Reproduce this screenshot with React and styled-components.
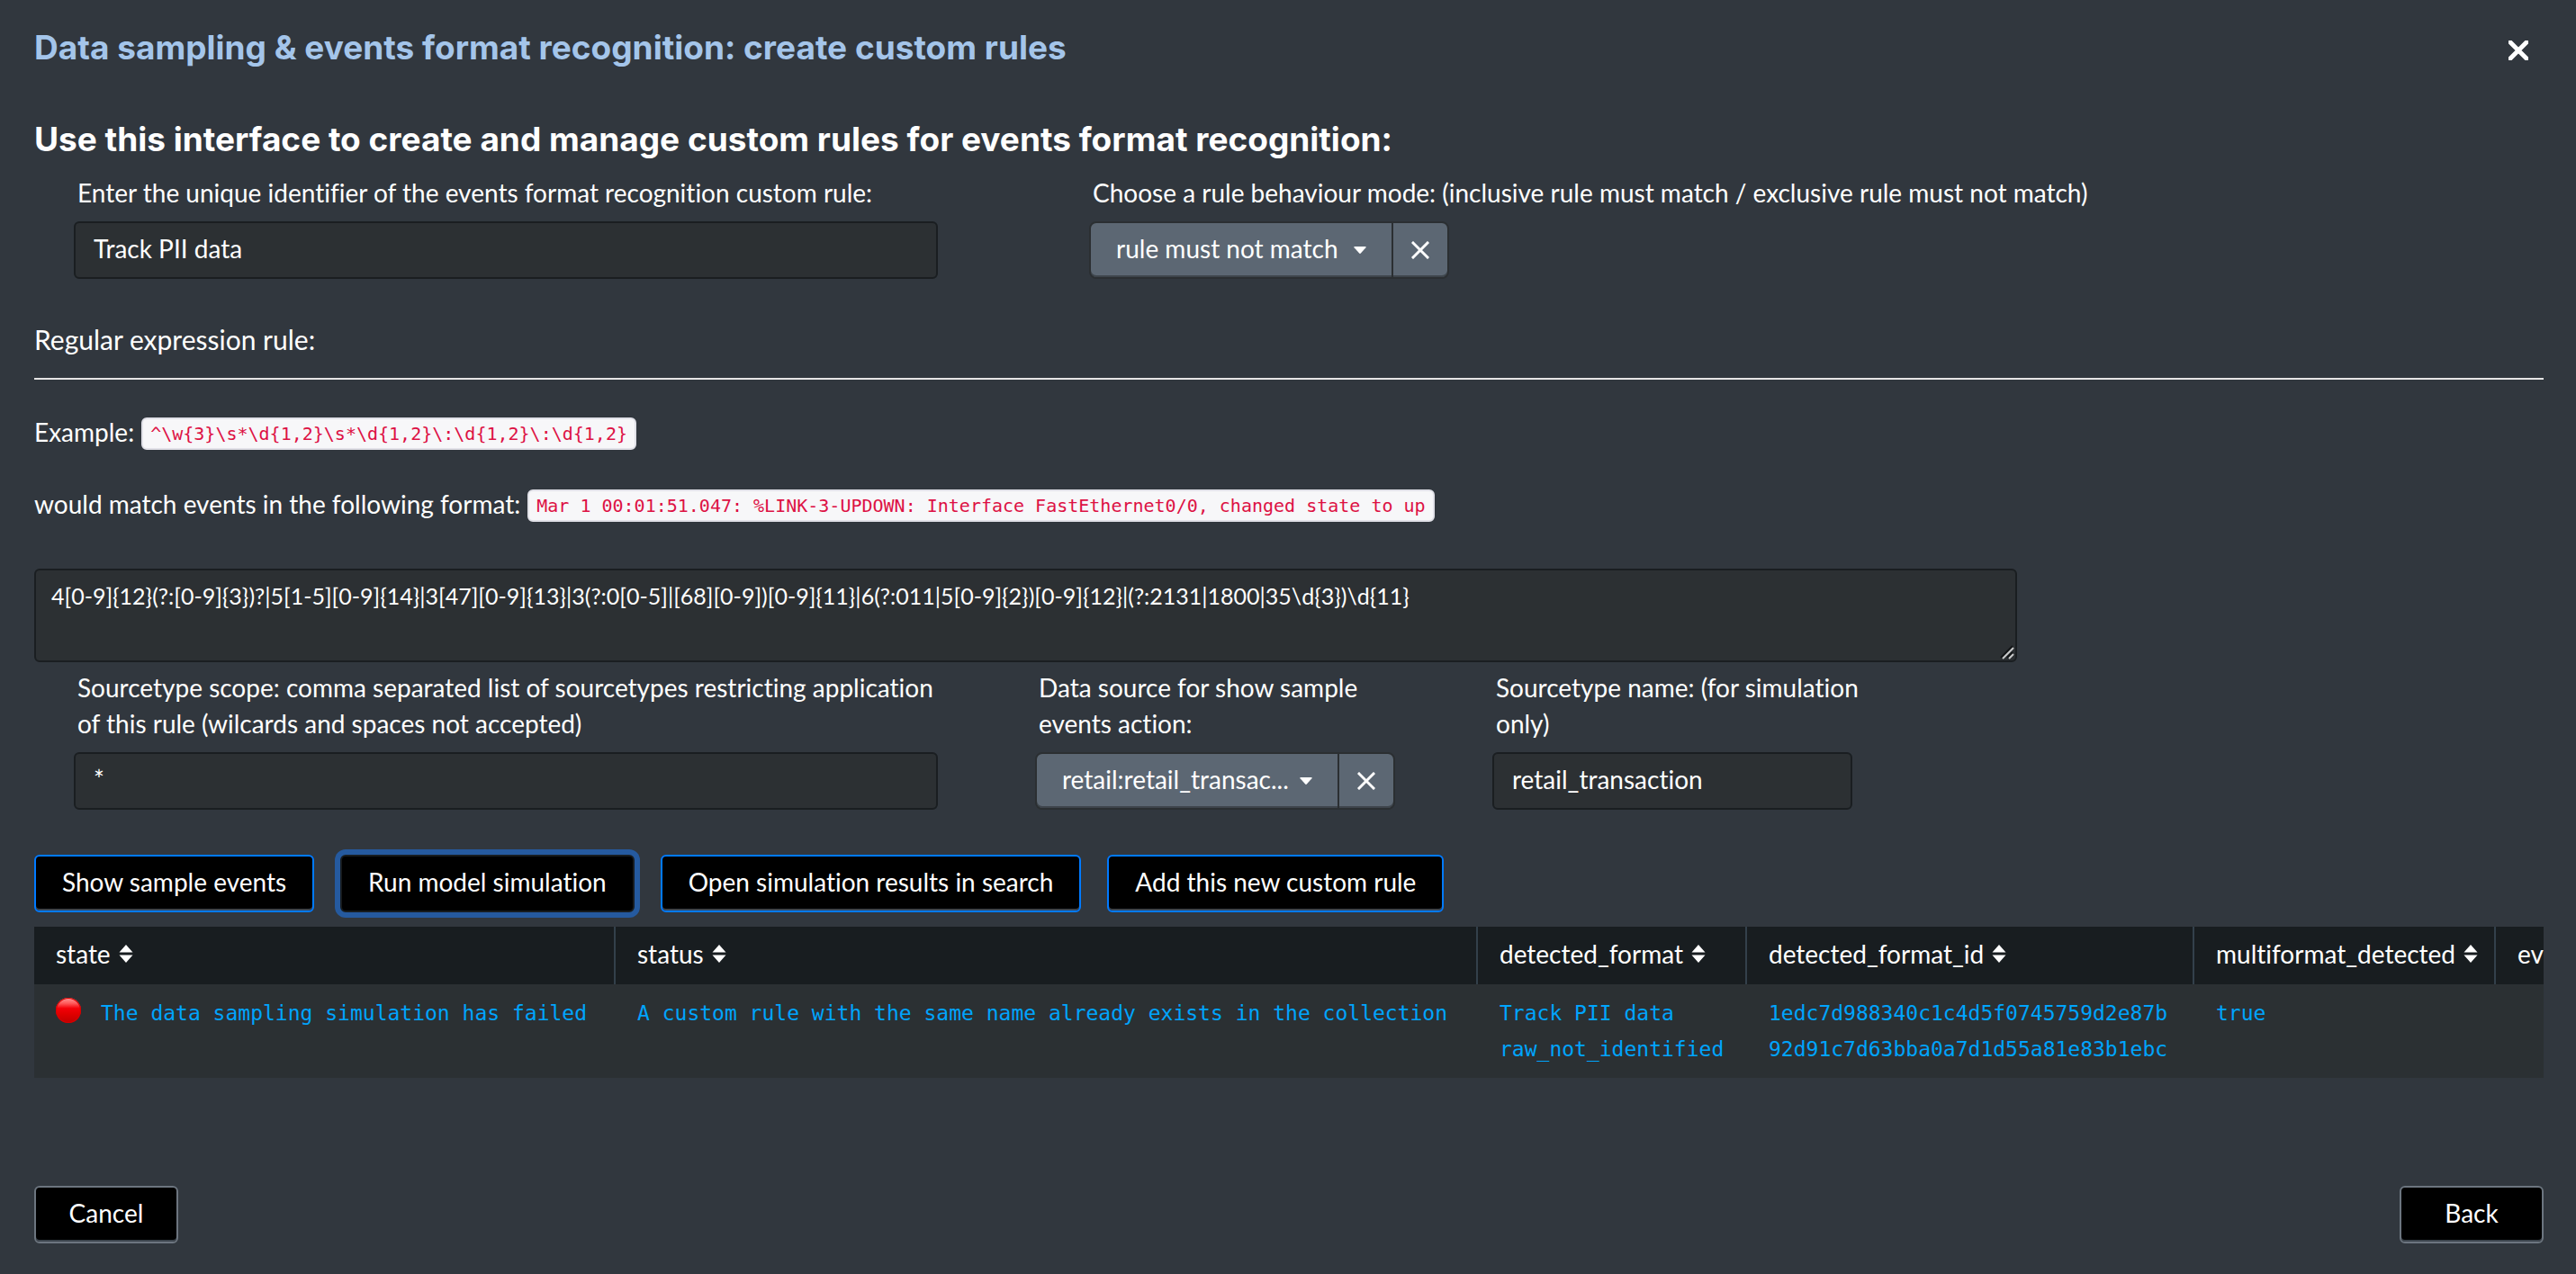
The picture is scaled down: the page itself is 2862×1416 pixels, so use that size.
import React, { useState } from "react";
import styled, { createGlobalStyle, css } from "styled-components";

const GlobalStyle = createGlobalStyle`
  *, *::before, *::after { box-sizing: border-box; }
  body {
    margin: 0;
    background: #31373e;
    color: #fff;
    font-family: Lato, "Liberation Sans", sans-serif;
    font-size: 28px;
    font-variant-ligatures: none;
    line-height: 40px;
  }
  button, input, select, textarea {
    font: inherit;
    font-variant-ligatures: none;
    color: inherit;
    margin: 0;
  }
`;

const Dialog = styled.main`
  min-height: 100vh;
  display: flex;
  flex-direction: column;
  padding: 25px 36px 34px 38px;
`;

const Header = styled.header`
  display: flex;
  justify-content: space-between;
  align-items: flex-start;
  margin-bottom: 40px;
`;

const headingText = css`
  margin: 0;
  font-family: Inter, Lato, sans-serif;
  font-size: 37px;
  font-weight: 700;
  line-height: 56px;
`;

const Title = styled.h1`
  ${headingText}
  color: #a4c5ea;
`;

const Heading = styled.h2`
  ${headingText}
`;

const CloseButton = styled.button`
  display: flex;
  align-items: center;
  justify-content: center;
  width: 56px;
  height: 62px;
  padding: 0;
  border: 0;
  background: none;
  cursor: pointer;
`;

const FieldRow = styled.div`
  display: flex;
  flex-wrap: wrap;
  column-gap: ${(p) => p.$gap}px;
  padding-left: 44px;
  margin-top: ${(p) => p.$top}px;
`;

const Field = styled.div`
  display: flex;
  flex-direction: column;
  gap: 12px;
  width: ${(p) => p.$width};
`;

const Label = styled.label`
  padding-left: 4px;
`;

const sunken = css`
  border: 2px solid #1a1e21;
  border-radius: 6px;
  background: #2c3033;
  outline: none;
`;

const TextInput = styled.input`
  ${sunken}
  width: ${(p) => p.$width};
  height: 64px;
  padding: 0 20px 5px;
`;

const PatternBox = styled.div`
  position: relative;
  width: 79%;
  margin-top: 52px;
`;

const Pattern = styled.textarea`
  ${sunken}
  display: block;
  width: 100%;
  height: 104px;
  padding: 8px 17px;
  font-size: 25px;
  resize: none;
`;

const Grip = styled.svg`
  position: absolute;
  right: 3px;
  bottom: 3px;
  pointer-events: none;
`;

const Picker = styled.div`
  display: flex;
  width: 400px;
  height: 64px;
  border: 2px solid #2b2f32;
  border-radius: 8px;
  background: #5c6773;
  box-shadow: inset 0 -2px 0 #3e454c;
`;

const SelectBox = styled.div`
  display: grid;
  flex: 1;
  min-width: 0;
  align-items: center;
`;

const Select = styled.select`
  grid-area: 1 / 1;
  appearance: none;
  width: 100%;
  height: 60px;
  padding: 0 48px 5px 28px;
  border: 0;
  background: none;
  outline: none;

  option { background: #5c6773; }
`;

const Caret = styled.svg`
  grid-area: 1 / 1;
  justify-self: end;
  margin-right: 28px;
  pointer-events: none;
`;

const ClearButton = styled.button`
  display: flex;
  align-items: center;
  justify-content: center;
  width: 62px;
  padding: 0;
  border: 0;
  border-left: 2px solid #2b2f32;
  background: none;
  cursor: pointer;
`;

const SectionTitle = styled.h3`
  margin: 47px 0 0;
  padding-bottom: 23px;
  border-bottom: 2px solid #e5e5e5;
  font-size: 30px;
  font-weight: 400;
`;

const Examples = styled.div`
  display: flex;
  flex-direction: column;
  gap: 40px;
  margin-top: 38px;
`;

const Example = styled.p`
  display: flex;
  align-items: flex-end;
  gap: 8px;
  margin: 0;
`;

const Code = styled.code`
  padding: 0 8px;
  border: 2px solid #e1e1e8;
  border-radius: 6px;
  background: #f7f7f9;
  color: #dd1144;
  font-family: "DejaVu Sans Mono", monospace;
  font-size: 20px;
  line-height: 32px;
`;

const Actions = styled.div`
  display: flex;
  flex-wrap: wrap;
  gap: 29px;
  margin-top: 50px;
`;

const Button = styled.button`
  min-width: 160px;
  height: 64px;
  padding: 0 29px 5px;
  border: 2px solid ${(p) => (p.$primary ? "#007aff" : "#6c757f")};
  border-radius: 6px;
  background: #000;
  box-shadow: inset 0 -2px 0 #3c444d;
  cursor: pointer;

  ${(p) =>
    p.$active &&
    css`
      border-color: #171c1f;
      box-shadow: 0 0 0 6px #255a9f;
    `}
`;

const Results = styled.div`
  margin-top: 16px;
  overflow: hidden;
`;

const Table = styled.table`
  table-layout: fixed;
  width: 3000px;
  border-collapse: separate;
  border-spacing: 0;
`;

const Column = styled.col`
  width: ${(p) => p.$width};
`;

const HeadCell = styled.th`
  height: 64px;
  padding: 0 20px 4px 24px;
  border-right: 2px solid #33404b;
  background: #181d20;
  font-weight: 400;
  text-align: left;
`;

const SortLabel = styled.span`
  display: flex;
  align-items: center;
  gap: 9px;

  svg { flex: none; }
`;

const Cell = styled.td`
  padding: 12px 20px 12px 24px;
  background: #2b3033;
  color: #00a4fd;
  font-family: "DejaVu Sans Mono", monospace;
  font-size: 23px;
  vertical-align: top;
`;

const Line = styled.div`
  white-space: nowrap;
`;

const State = styled.div`
  display: flex;
  align-items: center;
  gap: 22px;
  white-space: nowrap;
`;

const Dot = styled.span`
  width: 28px;
  height: 28px;
  margin-bottom: 6px;
  border-radius: 50%;
  background: linear-gradient(#ff9a9a 0%, #ff5a5a 22%, #f40008 42%, #e00000 65%, #c00000 100%);
  box-shadow: inset 0 0 0 1px #d60000;
`;

const Footer = styled.footer`
  display: flex;
  justify-content: space-between;
  margin-top: auto;
`;

function Cross({ size, stroke }) {
  return (
    <svg width={size} height={size} viewBox={`0 0 ${size} ${size}`} aria-hidden="true">
      <path
        d={`M2 2L${size - 2} ${size - 2}M${size - 2} 2L2 ${size - 2}`}
        stroke="#fff"
        strokeWidth={stroke}
        strokeLinecap="square"
      />
    </svg>
  );
}

function SortIcon() {
  return (
    <svg width="16" height="20" viewBox="0 0 16 20" aria-hidden="true">
      <path d="M8 0L15.5 8.4H0.5ZM8 20L15.5 11.6H0.5Z" fill="#fff" />
    </svg>
  );
}

function Dropdown({ id, value }) {
  return (
    <Picker>
      <SelectBox>
        <Select id={id} defaultValue={value}>
          <option>{value}</option>
        </Select>
        <Caret width="14" height="8" viewBox="0 0 14 8" aria-hidden="true">
          <path d="M0.8 0H13.2Q14 0.4 13.4 1.2L7.8 7.6Q7 8.2 6.2 7.6L0.6 1.2Q0 0.4 0.8 0Z" fill="#fff" />
        </Caret>
      </SelectBox>
      <ClearButton type="button" aria-label="Clear selection">
        <Cross size={20} stroke={3} />
      </ClearButton>
    </Picker>
  );
}

const COLUMNS = [
  ["state", "646px"],
  ["status", "958px"],
  ["detected_format", "299px"],
  ["detected_format_id", "497px"],
  ["multiformat_detected", "335px"],
  ["ev", "auto"],
];

const ACTIONS = [
  "Show sample events",
  "Run model simulation",
  "Open simulation results in search",
  "Add this new custom rule",
];

const PATTERN =
  "4[0-9]{12}(?:[0-9]{3})?|5[1-5][0-9]{14}|3[47][0-9]{13}|3(?:0[0-5]|[68][0-9])[0-9]{11}|6(?:011|5[0-9]{2})[0-9]{12}|(?:2131|1800|35\\d{3})\\d{11}";

export default function App() {
  const [active, setActive] = useState("Run model simulation");

  return (
    <>
      <GlobalStyle />
      <Dialog>
        <Header>
          <Title>Data sampling &amp; events format recognition: create custom rules</Title>
          <CloseButton type="button" aria-label="Close">
            <Cross size={22} stroke={5} />
          </CloseButton>
        </Header>

        <Heading>
          Use this interface to create and manage custom rules for events format recognition:
        </Heading>

        <FieldRow $gap={168} $top={11}>
          <Field $width="960px">
            <Label htmlFor="rule-id">
              Enter the unique identifier of the events format recognition custom rule:
            </Label>
            <TextInput id="rule-id" $width="100%" defaultValue="Track PII data" />
          </Field>
          <Field $width="auto">
            <Label htmlFor="rule-mode">
              Choose a rule behaviour mode: (inclusive rule must match / exclusive rule must not match)
            </Label>
            <Dropdown id="rule-mode" value="rule must not match" />
          </Field>
        </FieldRow>

        <SectionTitle>Regular expression rule:</SectionTitle>

        <Examples>
          <Example>
            Example: <Code>{"^\\w{3}\\s*\\d{1,2}\\s*\\d{1,2}\\:\\d{1,2}\\:\\d{1,2}"}</Code>
          </Example>
          <Example>
            would match events in the following format:{" "}
            <Code>
              Mar 1 00:01:51.047: %LINK-3-UPDOWN: Interface FastEthernet0/0, changed state to up
            </Code>
          </Example>
        </Examples>

        <PatternBox>
          <Pattern aria-label="Regular expression rule" spellCheck={false} defaultValue={PATTERN} />
          <Grip width="16" height="16" viewBox="0 0 16 16" aria-hidden="true">
            <path d="M1 14L14 1M8 14L14 8" stroke="#121517" strokeWidth="2" />
            <path d="M3 15L15 3M10 15L15 10" stroke="#c8c9ca" strokeWidth="2" />
          </Grip>
        </PatternBox>

        <FieldRow $gap={108} $top={8}>
          <Field $width="960px">
            <Label htmlFor="scope">
              Sourcetype scope: comma separated list of sourcetypes restricting application of this
              rule (wilcards and spaces not accepted)
            </Label>
            <TextInput id="scope" $width="100%" defaultValue="*" />
          </Field>
          <Field $width="400px">
            <Label htmlFor="source">Data source for show sample events action:</Label>
            <Dropdown id="source" value="retail:retail_transac..." />
          </Field>
          <Field $width="420px">
            <Label htmlFor="sourcetype">Sourcetype name: (for simulation only)</Label>
            <TextInput id="sourcetype" $width="400px" defaultValue="retail_transaction" />
          </Field>
        </FieldRow>

        <Actions>
          {ACTIONS.map((name) => (
            <Button
              key={name}
              type="button"
              $primary
              $active={name === active}
              onClick={() => setActive(name)}
            >
              {name}
            </Button>
          ))}
        </Actions>

        <Results>
          <Table>
            <colgroup>
              {COLUMNS.map(([name, width]) => (
                <Column key={name} $width={width} />
              ))}
            </colgroup>
            <thead>
              <tr>
                {COLUMNS.map(([name]) => (
                  <HeadCell key={name} scope="col">
                    <SortLabel>
                      {name}
                      <SortIcon />
                    </SortLabel>
                  </HeadCell>
                ))}
              </tr>
            </thead>
            <tbody>
              <tr>
                <Cell>
                  <State>
                    <Dot />
                    The data sampling simulation has failed
                  </State>
                </Cell>
                <Cell>
                  <Line>A custom rule with the same name already exists in the collection</Line>
                </Cell>
                <Cell>
                  <Line>Track PII data</Line>
                  <Line>raw_not_identified</Line>
                </Cell>
                <Cell>
                  <Line>1edc7d988340c1c4d5f0745759d2e87b</Line>
                  <Line>92d91c7d63bba0a7d1d55a81e83b1ebc</Line>
                </Cell>
                <Cell>
                  <Line>true</Line>
                </Cell>
                <Cell />
              </tr>
            </tbody>
          </Table>
        </Results>

        <Footer>
          <Button type="button">Cancel</Button>
          <Button type="button">Back</Button>
        </Footer>
      </Dialog>
    </>
  );
}
